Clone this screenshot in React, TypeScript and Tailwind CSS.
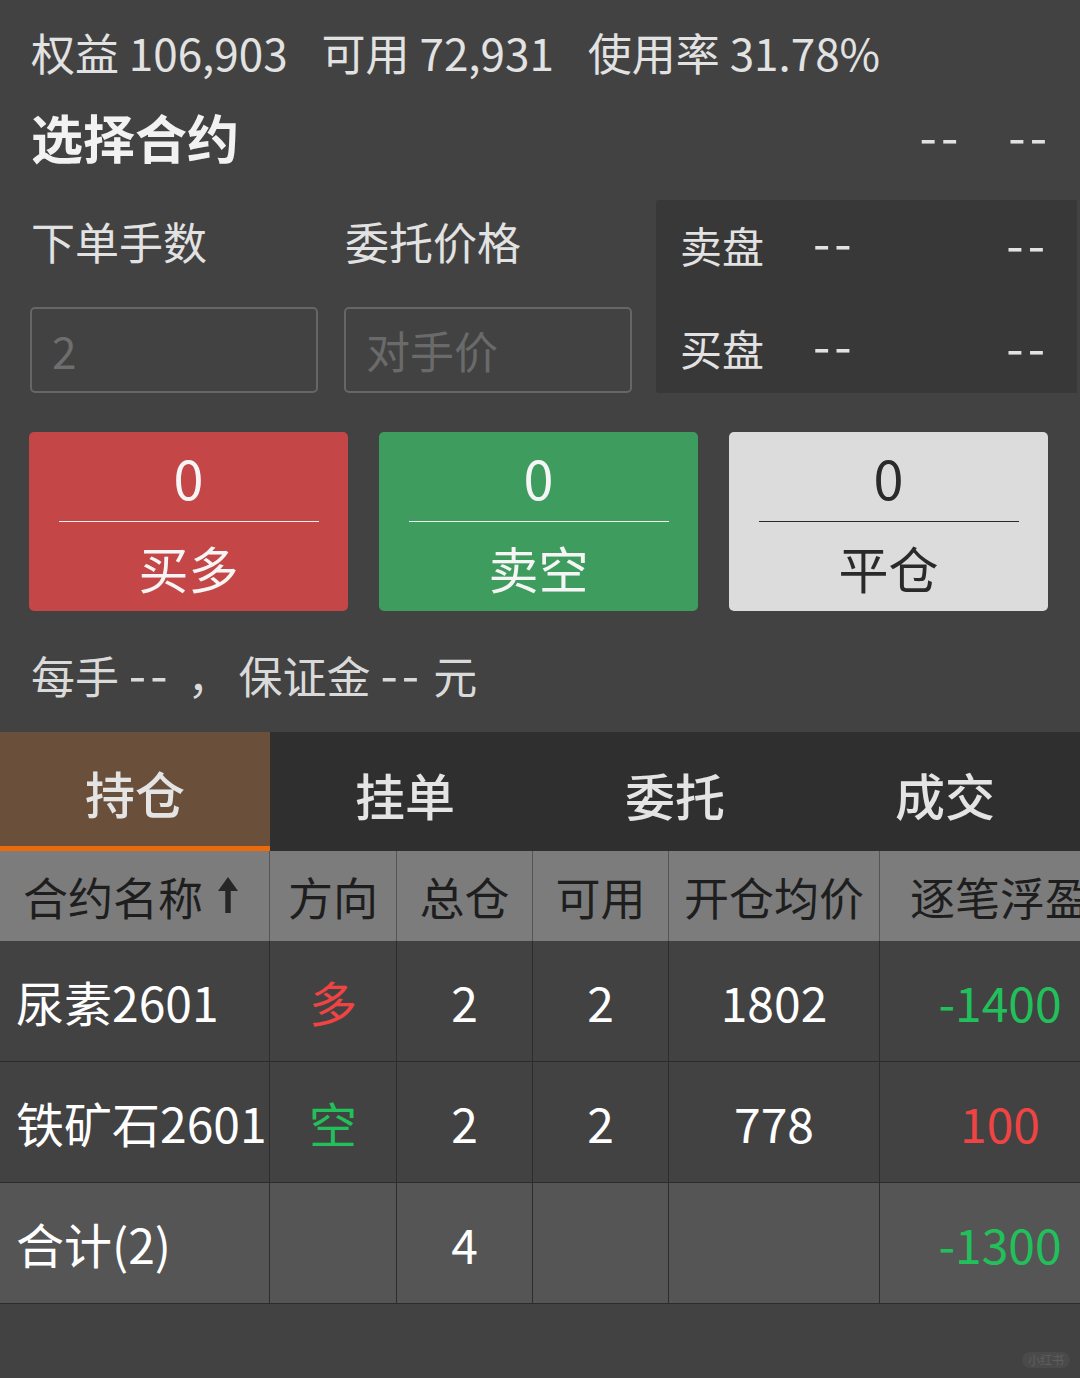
import React from 'react'

const font = { fontFamily: '"Noto Sans CJK SC", "Noto Sans", sans-serif' }

type Row = { name: string; dir?: string; dirColor?: string; total: string; avail: string; price: string; pnl: string; pnlColor: string; sum?: boolean }

const rows: Row[] = [
  { name: '尿素2601', dir: '多', dirColor: 'text-[#f04444]', total: '2', avail: '2', price: '1802', pnl: '-1400', pnlColor: 'text-[#22c05a]' },
  { name: '铁矿石2601', dir: '空', dirColor: 'text-[#22c05a]', total: '2', avail: '2', price: '778', pnl: '100', pnlColor: 'text-[#f04444]' },
  { name: '合计(2)', total: '4', avail: '', price: '', pnl: '-1300', pnlColor: 'text-[#22c05a]', sum: true },
]

const cols = 'grid grid-cols-[270px_127px_136px_136px_211px_240px] w-[1120px]'

// wider placeholder dashes, as the app font draws them
function Dash() {
  return <span className="inline-block -translate-y-[3px] text-[50px] tracking-[4px] mr-[-4px] leading-[44px]">--</span>
}

function ActionButton({ bg, label, dark }: { bg: string; label: string; dark?: boolean }) {
  const txt = dark ? 'text-[#2a2a2a]' : 'text-[#f5f5f5]'
  const line = dark ? 'bg-[#2a2a2a]' : 'bg-[#f0f0f0]'
  return (
    <div className={`w-[319px] h-[179px] rounded-[5px] flex flex-col items-center ${bg} ${txt}`}>
      <div className="h-[89px] flex items-center pt-[1px] text-[54px] leading-none">0</div>
      <div className={`w-[260px] h-px ${line}`} />
      <div className="h-[90px] flex items-center pt-[2px] text-[50px] leading-none">{label}</div>
    </div>
  )
}

export default function App() {
  return (
    <div className="w-[1080px] h-[1378px] bg-[#424242] overflow-hidden relative" style={font}>
      {/* Account summary */}
      <div className="h-[104px] flex items-center gap-[34px] pl-[31px] text-[44px] text-[#e2e2e2] leading-none">
        <span>权益 106,903</span>
        <span>可用 72,931</span>
        <span>使用率 31.78%</span>
      </div>

      {/* Contract title */}
      <div className="h-[66px] flex items-center justify-between pl-[31px] pr-[33px]">
        <span className="text-[52px] font-bold text-[#f2f2f2] leading-none">选择合约</span>
        <div className="flex gap-[50px] text-[#e2e2e2]">
          <Dash />
          <Dash />
        </div>
      </div>

      {/* Order inputs + depth */}
      <div className="mt-[30px] flex">
        <div className="w-[656px] pl-[30px]">
          <div className="h-[82px] flex items-center text-[44px] text-[#e2e2e2] leading-none">
            <span className="w-[315px] pl-px">下单手数</span>
            <span>委托价格</span>
          </div>
          <div className="mt-[25px] flex gap-[26px]">
            <div className="w-[288px] h-[86px] rounded-[5px] border-2 border-[#666666] flex items-center pl-[20px] text-[44px] text-[#6e6e6e] leading-none">2</div>
            <div className="w-[288px] h-[86px] rounded-[5px] border-2 border-[#666666] flex items-center pl-[20px] text-[44px] text-[#6a6a6a] leading-none">对手价</div>
          </div>
        </div>
        <div className="w-[421px] h-[193px] bg-[#383838] rounded-l-[3px] flex flex-col justify-center gap-[55px] pl-[24px] pr-[32px] text-[42px] text-[#e2e2e2] leading-[44px]">
          <div className="flex items-center">
            <span className="w-[133px]">卖盘</span>
            <span className="flex-1"><Dash /></span>
            <Dash />
          </div>
          <div className="flex items-center">
            <span className="w-[133px]">买盘</span>
            <span className="flex-1"><Dash /></span>
            <Dash />
          </div>
        </div>
      </div>

      {/* Action buttons */}
      <div className="mt-[39px] flex gap-[31px] pl-[29px]">
        <ActionButton bg="bg-[#c44646]" label="买多" />
        <ActionButton bg="bg-[#3f9c5f]" label="卖空" />
        <ActionButton bg="bg-[#dcdcdc]" label="平仓" dark />
      </div>

      {/* Margin info */}
      <div className="h-[121px] flex items-center pt-[6px] pl-[31px] text-[44px] text-[#dadada] leading-[44px] whitespace-pre">
        <span>每手 </span>
        <Dash />
        <span className="ml-[20px]">，</span>
        <span className="ml-[7px]">保证金 </span>
        <Dash />
        <span className="ml-[14px]">元</span>
      </div>

      {/* Tabs */}
      <div className="h-[119px] grid grid-cols-4 text-[50px] font-medium text-[#e4e4e4] leading-none">
        <div className="bg-[#6a4f3b] border-b-[5px] border-[#ea6a0c] flex items-center justify-center pt-[6px]">持仓</div>
        <div className="bg-[#2f2f2f] flex items-center justify-center pt-[4px]">挂单</div>
        <div className="bg-[#2f2f2f] flex items-center justify-center pt-[4px]">委托</div>
        <div className="bg-[#2f2f2f] flex items-center justify-center pt-[4px]">成交</div>
      </div>

      {/* Positions table */}
      <div className="overflow-hidden w-[1080px]">
        <div className={`${cols} h-[90px] bg-[#7c7c7c] text-[45px] text-[#1e1e1e] leading-none`}>
          <div className="border-r border-[#555555] flex items-center pl-[23px] gap-[12px]">
            <span>合约名称</span>
            <svg width="26" height="40" viewBox="0 0 26 40" className="mt-[-2px]">
              <path d="M13 38V12" fill="none" stroke="#262626" strokeWidth="5.5" />
              <path d="M13 2L3 16h20z" fill="#262626" />
            </svg>
          </div>
          <div className="border-r border-[#555555] flex items-center justify-center">方向</div>
          <div className="border-r border-[#555555] flex items-center justify-center">总仓</div>
          <div className="border-r border-[#555555] flex items-center justify-center">可用</div>
          <div className="border-r border-[#555555] flex items-center justify-center">开仓均价</div>
          <div className="flex items-center justify-center">逐笔浮盈</div>
        </div>
        {rows.map((r) => (
          <div
            key={r.name}
            className={`${cols} h-[121px] border-b border-[#2c2c2c] text-[48px] text-white leading-none ${r.sum ? 'bg-[#555555]' : 'bg-[#424242]'}`}
          >
            <div className="border-r border-[#2c2c2c] flex items-center pl-[16px] whitespace-nowrap">{r.name}</div>
            <div className={`border-r border-[#2c2c2c] flex items-center justify-center ${r.dirColor ?? ''}`}>{r.dir ?? ''}</div>
            <div className="border-r border-[#2c2c2c] flex items-center justify-center">{r.total}</div>
            <div className="border-r border-[#2c2c2c] flex items-center justify-center">{r.avail}</div>
            <div className="border-r border-[#2c2c2c] flex items-center justify-center">{r.price}</div>
            <div className={`flex items-center justify-center ${r.pnlColor}`}>{r.pnl}</div>
          </div>
        ))}
      </div>

      {/* watermark */}
      <div className="absolute right-[10px] bottom-[10px] px-[6px] py-[2px] rounded-full bg-[#4a4a4a] text-[12px] text-[#5e5e5e] leading-none">小红书</div>
    </div>
  )
}
